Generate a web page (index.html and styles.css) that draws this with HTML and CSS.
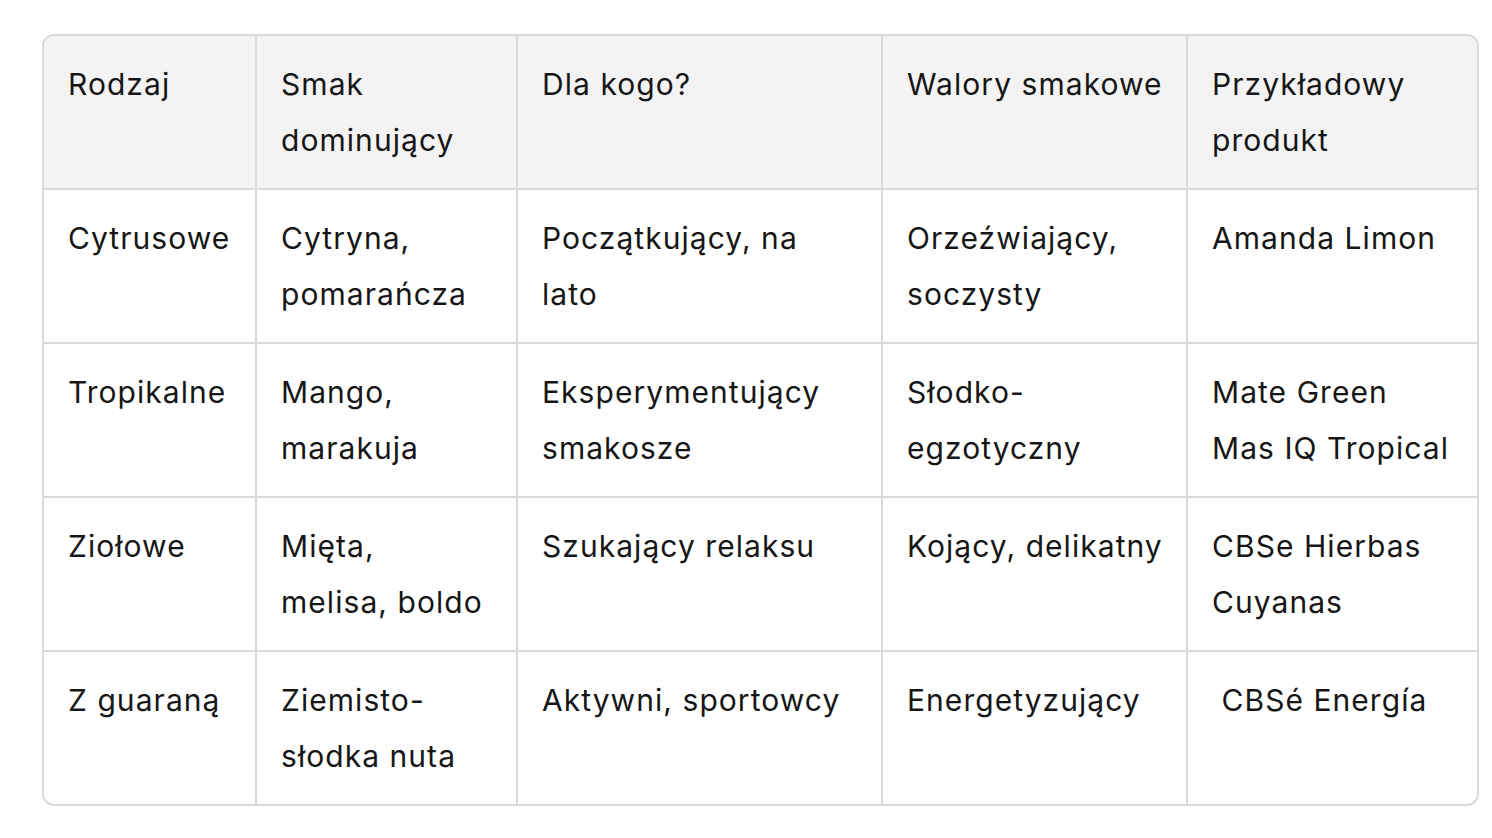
FILE: index.html
```html
<!DOCTYPE html>
<html lang="pl">
<head>
<meta charset="utf-8">
<link rel="stylesheet" href="styles.css">
</head>
<body>
<div class="wrap">
<table class="grid">
<colgroup>
<col class="c1"><col class="c2"><col class="c3"><col class="c4"><col class="c5">
</colgroup>
<thead>
<tr><th>Rodzaj</th><th>Smak dominujący</th><th>Dla kogo?</th><th>Walory smakowe</th><th>Przykładowy produkt</th></tr>
</thead>
<tbody>
<tr><td>Cytrusowe</td><td>Cytryna, pomarańcza</td><td>Początkujący, na lato</td><td>Orzeźwiający, soczysty</td><td>Amanda Limon</td></tr>
<tr><td>Tropikalne</td><td>Mango, marakuja</td><td>Eksperymentujący smakosze</td><td>Słodko-egzotyczny</td><td>Mate Green<br>Mas IQ Tropical</td></tr>
<tr><td>Ziołowe</td><td>Mięta,<br>melisa, boldo</td><td>Szukający relaksu</td><td>Kojący, delikatny</td><td>CBSe Hierbas Cuyanas</td></tr>
<tr><td>Z guaraną</td><td>Ziemisto-słodka nuta</td><td>Aktywni, sportowcy</td><td>Energetyzujący</td><td>&nbsp;CBSé Energía</td></tr>
</tbody>
</table>
</div>
</body>
</html>
```

FILE: styles.css
```css
html, body {
  margin: 0;
  padding: 0;
  background: #ffffff;
}
.wrap {
  padding: 34px 13px 0 42px;
}
.grid {
  table-layout: fixed;
  width: 1437px;
  border-collapse: separate;
  border-spacing: 0;
  border: 2px solid #d9d9de;
  border-radius: 12px;
  overflow: hidden;
  font-family: "Inter", "Liberation Sans", sans-serif;
  font-size: 30px;
  letter-spacing: 1.05px;
  line-height: 56px;
  color: #161616;
}
.c1 { width: 211px; }
.c2 { width: 261px; }
.c3 { width: 365px; }
.c4 { width: 305px; }
.c5 { width: 291px; }
.grid th, .grid td {
  text-align: left;
  vertical-align: top;
  font-weight: 400;
  padding: 20px 20px 20px 24px;
  border-left: 2px solid #d9d9de;
  border-top: 2px solid #d9d9de;
}
.grid th:first-child, .grid td:first-child {
  border-left: none;
}
.grid thead th {
  border-top: none;
  background: #f3f3f3;
}
```
